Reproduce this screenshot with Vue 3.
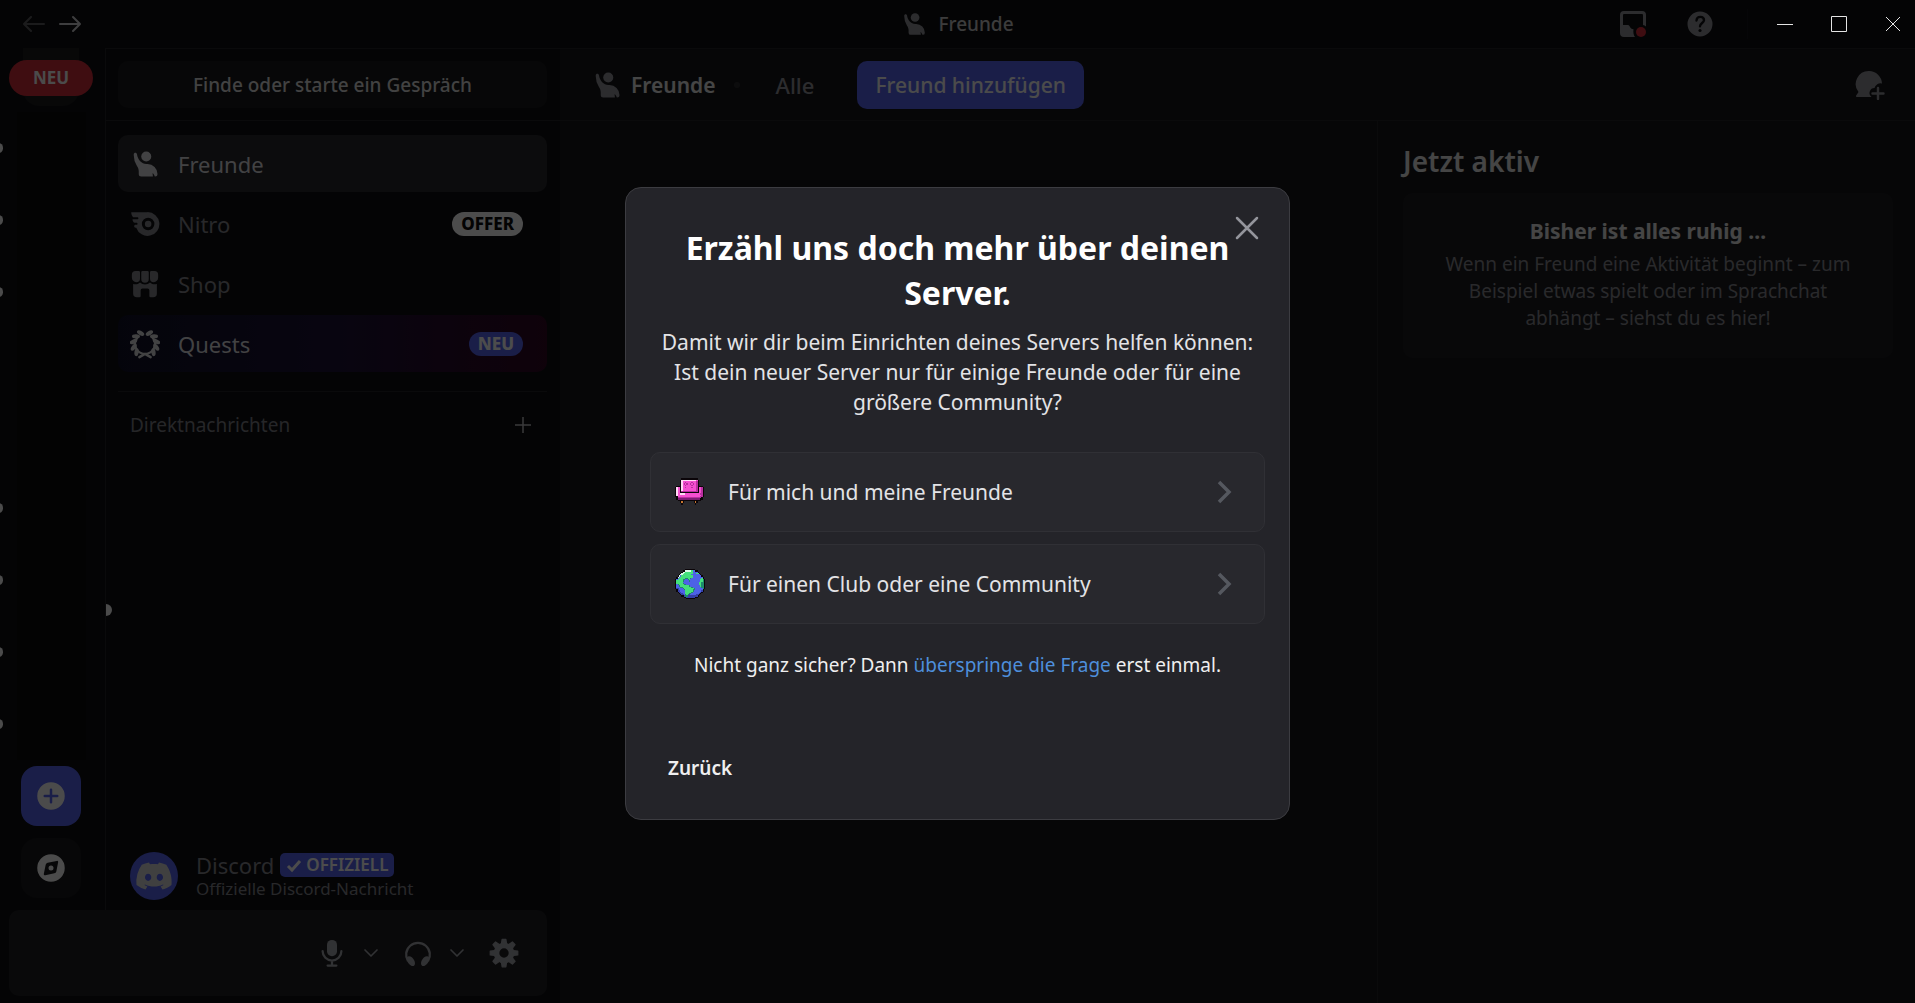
<script setup>
const navItems = [
  { label: 'Freunde', icon: 'friends', active: true },
  { label: 'Nitro', icon: 'nitro', badge: 'OFFER', badgeClass: 'badge-light' },
  { label: 'Shop', icon: 'shop' },
  { label: 'Quests', icon: 'quests', badge: 'NEU', badgeClass: 'badge-blurple', promo: true },
]

// true = server has unread messages
const servers = [true, true, true, false, false, true, true, true, true]

const options = [
  { label: 'Für mich und meine Freunde', icon: 'sofa' },
  { label: 'Für einen Club oder eine Community', icon: 'globe' },
]

// position of each wreath leaf, in degrees from the top
const leaves = [22, 50, 78, 106, 134]
const teeth = [0, 45, 90, 135, 180, 225, 270, 315]

const sofaArt = [
  '.....kkkkkkkkkkkkk......',
  '....kwwwwwwwwwwwwpk.....',
  '....kwpppppppppppmk.....',
  '....kwppmppppmpppmk.....',
  '....kwpmpmppmpmppmk.....',
  '....kwppmppppmpppmk.....',
  '.kkkkwpppppppppppmkkkk..',
  'kwppkwppmppppmpppmkppmk.',
  'kwppkwpppppppppppmkppmk.',
  'kwppkwpppppppppppmkppmk.',
  'kwppkmmmmmmmmmmmmmkppmk.',
  'kwppkkkkkkkkkkkkkkkppmk.',
  'kwppwwwwppppppppppppmmk.',
  'kwpppppppppppppppppppmk.',
  'kkppppppppppppppppppmmk.',
  '.kmmmmmmmmmmmmmmmmmmmk..',
  '.kddddddddddddddddddkk..',
  '..kkkkkkkkkkkkkkkkkkk...',
  '....kok........kok......',
  '....kok........kok......',
  '.....k..........k.......',
]
const globeArt = [
  '........kkkkkkkk........',
  '......kkwwwwwgbbkk......',
  '.....kwwggggggbbbbk.....',
  '....kwwgggggggbbbggk....',
  '...kwwgggggggbbbbbbbk...',
  '..kwbgggggggggbbbbbbbk..',
  '.kwbggggggggggbbbbbbbbk.',
  '.kbgggggttggtbbbbbbbbgk.',
  'kbggggttbbtgbbbbbbbbggtk',
  'kgggggtbbbbtbbbbbbbbggtk',
  'kgggggbbbbbbbbbbbbbggttk',
  'kgggggtbbbbbbbbbbbbggttk',
  'kbtggggttbbbbbbbbbbggttk',
  'kbbtgggggggtbbbbbbbbgttk',
  'kbbbttgggggggtbbbbbbbttk',
  'kddbbbtggggggggtbbbbbbtk',
  '.kdbbbbtggggggttbbbbbbk.',
  '.kddbbbbggggggtbbbbbbdk.',
  '..kddbbbgggggtbbbbbbdk..',
  '...kddbbgggttbbbbbbdk...',
  '....kddbtgtdbbbbbddk....',
  '.....kkdttddddddddk.....',
  '.......kkdddddddkk......',
  '.........kkkkkkk........',
]
const palette = {
  k: '#0b0509', w: '#ffd9f4', p: '#f44fd0', m: '#b92fa0', d: '#7d1c74', o: '#c9772f',
  g: '#43e07c', b: '#4d62e6', t: '#1d8a6c',
}
const globePalette = { ...palette, w: '#d9fbe6', d: '#3440a8' }

function pixels(rows, colors) {
  const out = []
  rows.forEach((row, y) => {
    let x = 0
    while (x < row.length) {
      let end = x + 1
      while (end < row.length && row[end] === row[x]) end++
      if (row[x] !== '.') out.push({ x, y, w: end - x, fill: colors[row[x]] })
      x = end
    }
  })
  return out
}
const art = {
  sofa: pixels(sofaArt, palette),
  globe: pixels(globeArt, globePalette),
}
</script>

<template>
  <div class="app">
    <svg class="defs" aria-hidden="true">
      <symbol id="i-friends" viewBox="0 0 24 24">
        <path d="M13 10a4 4 0 1 0 0-8 4 4 0 0 0 0 8Z" />
        <path d="M3 5v-.75C3 3.56 3.56 3 4.25 3s1.24.56 1.33 1.25C6.12 8.65 9.46 12 13 12h1a8 8 0 0 1 8 8 2 2 0 0 1-2 2 .21.21 0 0 1-.2-.15 7.65 7.65 0 0 0-1.32-2.3c-.15-.2-.42-.06-.39.17l.25 2c.02.15-.1.28-.25.28H9a2 2 0 0 1-2-2v-2.22c0-1.57-.67-3.05-1.53-4.37A15.85 15.85 0 0 1 3 5Z" />
      </symbol>
      <symbol id="i-nitro" viewBox="0 0 24 24">
        <path fill-rule="evenodd" d="M1 2.500h13a9.500 9.500 0 1 1-9 12.500h-.5a1.200 1.200 0 0 1-1.200-1.300c0-.7.5-1.200 1.200-1.200h.9c.5 0 .6-.4.6-.8 0-.5-.4-.7-.8-.7H4C2.600 11 2 9.500 2 8.200h3.800c.6 0 .9-.4.9-.9s-.3-.8-.9-.8H2.600C1.500 5.500 1 4.200 1 2.500Zm13.500 4.500a5 5 0 1 0 0 10 5 5 0 0 0 0-10Z" />
        <circle cx="14.500" cy="12" r="2.600" />
      </symbol>
      <symbol id="i-shop" viewBox="0 0 24 24">
        <path d="M4.500 1.500H7a1 1 0 0 1 1 1v5A3 3 0 0 1 5 10.500 3.500 3.500 0 0 1 1.500 7V4.500a3 3 0 0 1 3-3ZM10 1.500h4a1 1 0 0 1 1 1V8a3 3 0 1 1-6 0V2.500a1 1 0 0 1 1-1ZM17 1.500h2.500a3 3 0 0 1 3 3V7a3.500 3.500 0 0 1-3.500 3.500 3 3 0 0 1-3-3v-5a1 1 0 0 1 1-1Z" />
        <path d="M2.500 12c2 .6 4 .2 5.500-1.200 2 2 6 2 8 0 1.500 1.400 3.500 1.800 5.500 1.200v7.500a3 3 0 0 1-3 3h-2a1 1 0 0 1-1-1V17a1.500 1.500 0 0 0-1.500-1.500h-4A1.500 1.500 0 0 0 8.500 17v4.500a1 1 0 0 1-1 1h-2a3 3 0 0 1-3-3V12Z" />
      </symbol>
      <symbol id="i-quests" viewBox="0 0 24 24">
        <path d="M12 20a8 8 0 0 1-6-13.200M12 20a8 8 0 0 0 6-13.200" fill="none" stroke="currentColor" stroke-width="1.800" />
        <g v-for="a in leaves" :key="a">
          <ellipse cx="12" cy="2.600" rx="3.200" ry="1.700" :transform="`rotate(${a} 12 12) rotate(-52 12 2.600)`" />
          <ellipse cx="12" cy="2.600" rx="3.200" ry="1.700" :transform="`rotate(${-a} 12 12) rotate(52 12 2.600)`" />
        </g>
        <path d="m7.500 22.500 4.500-2.500 4.500 2.500" fill="none" stroke="currentColor" stroke-width="2" stroke-linecap="round" />
      </symbol>
      <symbol id="i-chevron" viewBox="0 0 24 24">
        <path d="m4 8 8 8 8-8" fill="none" stroke="currentColor" stroke-width="2.200" stroke-linecap="round" stroke-linejoin="round" />
      </symbol>
      <symbol id="i-close" viewBox="0 0 24 24">
        <path d="m4 4 16 16M20 4 4 20" fill="none" stroke="currentColor" stroke-width="2" stroke-linecap="round" />
      </symbol>
    </svg>

    <header class="titlebar">
      <div class="history">
        <button class="icon-btn faded" aria-label="Zurück navigieren">
          <svg width="24" height="24" viewBox="0 0 24 24"><path d="M22 12H2.500M9 5l-7 7 7 7" class="line" /></svg>
        </button>
        <button class="icon-btn" aria-label="Vorwärts navigieren">
          <svg width="24" height="24" viewBox="0 0 24 24"><path d="M2 12h19.500M15 5l7 7-7 7" class="line" /></svg>
        </button>
      </div>
      <div class="window-title">
        <svg width="26" height="26" class="muted"><use href="#i-friends" /></svg>
        <span>Freunde</span>
      </div>
      <div class="title-tools">
        <button class="icon-btn muted" aria-label="Posteingang">
          <svg width="28" height="28" viewBox="0 0 28 28">
            <path fill-rule="evenodd" d="M5 1h18a4 4 0 0 1 4 4v11.500a7 7 0 0 0-3-1.500V5a1 1 0 0 0-1-1H5a1 1 0 0 0-1 1v10h5c1.200 0 1.500 1 2 2s1.500 2 3.500 2.200c-.4 2.800 0 5.800 1.500 7.800H5a4 4 0 0 1-4-4V5a4 4 0 0 1 4-4Z" />
            <circle cx="22" cy="22" r="5" fill="#d22d39" />
          </svg>
        </button>
        <button class="icon-btn muted" aria-label="Hilfe">
          <svg width="26" height="26" viewBox="0 0 26 26">
            <path fill-rule="evenodd" d="M13 .5a12.500 12.500 0 1 1 0 25 12.500 12.500 0 0 1 0-25Z" />
            <path d="M9.500 9.500c.3-5 7.500-4.500 7.500-.3 0 2.600-4 3-4 6" fill="none" stroke="#0f0f13" stroke-width="2.400" stroke-linecap="round" />
            <circle cx="13" cy="19.500" r="1.600" fill="#0f0f13" />
          </svg>
        </button>
        <span class="divider"></span>
        <div class="window-controls">
          <button class="icon-btn" aria-label="Minimieren">
            <svg width="16" height="16" viewBox="0 0 16 16"><path d="M0 8.500h16" class="thin" /></svg>
          </button>
          <button class="icon-btn" aria-label="Maximieren">
            <svg width="16" height="16" viewBox="0 0 16 16"><path d="M.5.5h15v15H.5Z" class="thin" /></svg>
          </button>
          <button class="icon-btn" aria-label="Fenster schließen">
            <svg width="16" height="16" viewBox="0 0 16 16"><path d="m1 1 14 14M15 1 1 15" class="thin" /></svg>
          </button>
        </div>
      </div>
    </header>

    <div class="body">
      <div class="left">
        <div class="left-top">
          <nav class="rail" aria-label="Server">
            <div class="folder"></div>
            <div v-for="(unread, i) in servers" :key="i" class="server">
              <span v-if="unread" class="pip"></span>
            </div>
            <button class="rail-btn add" aria-label="Server hinzufügen">
              <svg width="30" height="30" viewBox="0 0 24 24"><path fill-rule="evenodd" d="M12 23a11 11 0 1 0 0-22 11 11 0 0 0 0 22Zm0-17a1 1 0 0 1 1 1v4h4a1 1 0 1 1 0 2h-4v4a1 1 0 1 1-2 0v-4H7a1 1 0 1 1 0-2h4V7a1 1 0 0 1 1-1Z" /></svg>
            </button>
            <button class="rail-btn discover" aria-label="Entdecken">
              <svg width="30" height="30" viewBox="0 0 24 24">
                <path fill-rule="evenodd" d="M23 12a11 11 0 1 1-22 0 11 11 0 0 1 22 0ZM7.740 9.300A2 2 0 0 1 9.300 7.750l7.220-1.450a1 1 0 0 1 1.180 1.180l-1.450 7.220a2 2 0 0 1-1.570 1.570l-7.220 1.450a1 1 0 0 1-1.180-1.180L7.740 9.300Z" />
                <circle cx="12" cy="12" r="2" />
              </svg>
            </button>
            <a href="#" class="new-pill">NEU</a>
          </nav>

          <aside class="sidebar">
            <div class="search-row">
              <button class="search">Finde oder starte ein Gespräch</button>
            </div>
            <nav class="nav">
              <a v-for="item in navItems" :key="item.label" href="#" class="nav-item"
                 :class="{ active: item.active, promo: item.promo }">
                <svg width="30" height="30"><use :href="`#i-${item.icon}`" /></svg>
                <span class="nav-label">{{ item.label }}</span>
                <span v-if="item.badge" class="badge" :class="item.badgeClass">{{ item.badge }}</span>
              </a>
            </nav>
            <div class="dm-head">
              <h2>Direktnachrichten</h2>
              <button class="icon-btn" aria-label="Direktnachricht erstellen">
                <svg width="16" height="16" viewBox="0 0 16 16"><path d="M8 0v16M0 8h16" fill="none" stroke="currentColor" stroke-width="1.500" /></svg>
              </button>
            </div>
            <div class="dm-list">
              <span class="dm-pip"></span>
              <a href="#" class="dm">
                <span class="avatar">
                  <svg width="38" height="38" viewBox="0 0 24 24"><path d="M19.730 4.870a18.200 18.200 0 0 0-4.600-1.440c-.21.4-.4.8-.58 1.210-1.690-.25-3.400-.25-5.100 0-.18-.41-.37-.82-.59-1.200-1.600.27-3.140.75-4.600 1.430A19.040 19.040 0 0 0 .96 17.700a18.430 18.430 0 0 0 5.630 2.870c.46-.62.86-1.280 1.200-1.980-.65-.25-1.290-.55-1.900-.92.17-.12.32-.24.47-.37 3.580 1.700 7.700 1.700 11.280 0l.46.37c-.6.36-1.250.67-1.900.92.35.7.75 1.350 1.200 1.980 2.030-.63 3.940-1.600 5.640-2.870.47-4.870-.78-9.090-3.300-12.830ZM8.300 15.120c-1.100 0-2-1.020-2-2.270 0-1.240.88-2.260 2-2.260s2.020 1.020 2 2.260c0 1.250-.89 2.270-2 2.270Zm7.400 0c-1.100 0-2-1.020-2-2.270 0-1.240.88-2.260 2-2.260s2.020 1.020 2 2.260c0 1.250-.88 2.270-2 2.270Z" /></svg>
                </span>
                <span class="dm-text">
                  <span class="dm-name">Discord
                    <span class="official">
                      <svg width="16" height="16" viewBox="0 0 16 16"><path d="m2 9 4 4 8-9" fill="none" stroke="currentColor" stroke-width="3" /></svg>OFFIZIELL</span>
                  </span>
                  <span class="dm-sub">Offizielle Discord-Nachricht</span>
                </span>
              </a>
            </div>
          </aside>
        </div>

        <section class="user-panel" aria-label="Benutzerbereich">
          <button class="icon-btn" aria-label="Stummschalten">
            <svg width="30" height="30" viewBox="0 0 24 24">
              <rect x="8" y="1.500" width="8" height="13" rx="4" />
              <path d="M4.500 10.500a7.500 7.500 0 0 0 15 0M12 18v4M8.500 22h7" fill="none" stroke="currentColor" stroke-width="1.800" stroke-linecap="round" />
            </svg>
          </button>
          <button class="icon-btn chev" aria-label="Eingabeoptionen">
            <svg width="18" height="18"><use href="#i-chevron" /></svg>
          </button>
          <button class="icon-btn" aria-label="Ein- und Ausgabe deaktivieren">
            <svg width="30" height="30" viewBox="0 0 24 24">
              <path d="M4 18.500A9.500 9.500 0 1 1 20 18.500" fill="none" stroke="currentColor" stroke-width="1.800" />
              <ellipse cx="6.300" cy="18.500" rx="2.600" ry="4.400" transform="rotate(-35 6.300 18.500)" />
              <ellipse cx="17.700" cy="18.500" rx="2.600" ry="4.400" transform="rotate(35 17.700 18.500)" />
            </svg>
          </button>
          <button class="icon-btn chev" aria-label="Ausgabeoptionen">
            <svg width="18" height="18"><use href="#i-chevron" /></svg>
          </button>
          <button class="icon-btn" aria-label="Einstellungen">
            <svg width="30" height="30" viewBox="0 0 24 24">
              <circle cx="12" cy="12" r="6" fill="none" stroke="currentColor" stroke-width="4.500" />
              <path v-for="t in teeth" :key="t" d="M10 4.500 10.500 1h3l.5 3.500Z" stroke="currentColor" stroke-linejoin="round" :transform="`rotate(${t} 12 12)`" />
            </svg>
          </button>
        </section>
      </div>

      <main class="main">
        <header class="main-head">
          <svg width="30" height="30" class="muted"><use href="#i-friends" /></svg>
          <h1>Freunde</h1>
          <span class="dot"></span>
          <button class="tab">Alle</button>
          <button class="add-friend">Freund hinzufügen</button>
          <button class="icon-btn muted new-dm" aria-label="Neue Gruppen-DM">
            <svg width="30" height="30" viewBox="0 0 30 30">
              <path d="M14 1a13 13 0 0 1 13 12.500 6 6 0 0 0-7.500 4.500 5 5 0 0 0-3 9H2a1 1 0 0 1-.8-1.600L3.500 22A13 13 0 0 1 14 1Z" />
              <path d="M23 18v11M17.500 23.500h11" fill="none" stroke="currentColor" stroke-width="2.400" stroke-linecap="round" />
            </svg>
          </button>
        </header>
        <div class="main-body">
          <div class="people"></div>
          <aside class="now">
            <h2>Jetzt aktiv</h2>
            <div class="quiet">
              <h3>Bisher ist alles ruhig …</h3>
              <p>Wenn ein Freund eine Aktivität beginnt – zum Beispiel etwas spielt oder im Sprachchat abhängt – siehst du es hier!</p>
            </div>
          </aside>
        </div>
      </main>
    </div>

    <div class="backdrop">
      <div class="modal" role="dialog" aria-modal="true" aria-labelledby="modal-title">
        <button class="icon-btn modal-close" aria-label="Schließen">
          <svg width="30" height="30"><use href="#i-close" /></svg>
        </button>
        <h2 id="modal-title">Erzähl uns doch mehr über deinen Server.</h2>
        <p class="lead">Damit wir dir beim Einrichten deines Servers helfen können: Ist dein neuer Server nur für einige Freunde oder für eine größere Community?</p>
        <div class="options">
          <button v-for="o in options" :key="o.label" class="option">
            <svg width="30" height="30" viewBox="0 0 24 24" shape-rendering="crispEdges">
              <g :transform="o.icon === 'sofa' ? 'translate(0 1)' : undefined">
                <rect v-for="(p, i) in art[o.icon]" :key="i" :x="p.x" :y="p.y" :width="p.w" height="1" :fill="p.fill" />
              </g>
            </svg>
            <span class="option-label">{{ o.label }}</span>
            <svg class="option-arrow" width="16" height="24" viewBox="0 0 16 24"><path d="m2 2 10 10L2 22" fill="none" stroke="currentColor" stroke-width="3.500" /></svg>
          </button>
        </div>
        <p class="skip">Nicht ganz sicher? Dann <a href="#">überspringe die Frage</a> erst einmal.</p>
        <footer>
          <button class="back">Zurück</button>
        </footer>
      </div>
    </div>
  </div>
</template>

<style>
body {
  margin: 0;
  background: #050506;
}
</style>

<style scoped>
.app {
  display: flex;
  flex-direction: column;
  height: 100vh;
  overflow: hidden;
  background: #0f0f13;
  color: #fbfbfb;
  font-family: "Noto Sans", "Open Sans", sans-serif;
  font-size: 21px;
}
.app * { box-sizing: border-box; }
.defs { position: absolute; width: 0; height: 0; }
h1, h2, h3, p { margin: 0; }
a { color: inherit; text-decoration: none; }
button {
  padding: 0;
  border: 0;
  background: none;
  color: inherit;
  font: inherit;
  cursor: pointer;
}
svg { display: block; flex: none; fill: currentColor; }
.icon-btn { display: flex; align-items: center; justify-content: center; }
.muted { color: #94959c; }
.line { fill: none; stroke: currentColor; stroke-width: 2; stroke-linecap: round; stroke-linejoin: round; }
.thin { fill: none; stroke: currentColor; stroke-width: 1; }

.titlebar {
  display: grid;
  grid-template-columns: 1fr auto 1fr;
  align-items: center;
  height: 48px;
  flex: none;
}
.history { display: flex; gap: 12px; padding-left: 22px; color: #d0d0d2; }
.faded { opacity: .4; }
.window-title { display: flex; align-items: center; gap: 11px; font-size: 19px; font-weight: 500; color: #c8c8c8; }
.title-tools { display: flex; align-items: center; justify-content: flex-end; gap: 40px; }
.divider { width: 1px; height: 30px; margin: 0 -11px 0 -6px; background: #17171b; }
.window-controls {
  position: relative;
  z-index: 3;
  display: flex;
  gap: 38px;
  padding-right: 14px;
  color: #e4e4e4;
}

.body { display: flex; flex: 1; min-height: 0; }
.left { display: flex; flex-direction: column; width: 560px; flex: none; }
.left-top { display: flex; flex: 1; min-height: 0; }
.rail {
  position: relative;
  display: flex;
  flex-direction: column;
  gap: 12px;
  width: 105px;
  flex: none;
  overflow: hidden;
}
.folder { width: 56px; height: 58px; flex: none; margin-left: 23px; border-radius: 0 0 16px 16px; background: #1b1b1d; }
.server { position: relative; height: 60px; flex: none; }
.server::before {
  content: "";
  position: absolute;
  inset: -6px 19px -6px 17px;
  background: #0a0a0b;
}
.pip { position: absolute; left: -6px; top: 25px; width: 9px; height: 10px; border-radius: 5px; background: #fbfbfb; }
.rail-btn {
  display: flex;
  align-items: center;
  justify-content: center;
  width: 60px;
  height: 60px;
  flex: none;
  margin-left: 21px;
  border-radius: 16px;
}
.add { background: #5865f2; }
.discover { background: #19191b; }
.new-pill {
  position: absolute;
  top: 12px;
  left: 9px;
  width: 84px;
  height: 36px;
  border-radius: 18px;
  background: #d22d39;
  font-size: 17px;
  font-weight: 700;
  line-height: 36px;
  text-align: center;
}

.sidebar {
  display: flex;
  flex-direction: column;
  flex: 1;
  min-width: 0;
  border-top: 1px solid #232327;
  border-left: 1px solid #232327;
}
.search-row { padding: 12px 13px 12px 12px; border-bottom: 1px solid #232327; }
.search {
  width: 100%;
  height: 47px;
  border-radius: 10px;
  background: #1a1a1b;
  color: #dcdcdd;
  font-size: 19px;
  font-weight: 500;
}
.nav {
  display: flex;
  flex-direction: column;
  gap: 3px;
  margin: 0 13px 0 12px;
  padding: 14px 0 19px;
  border-bottom: 1px solid #232327;
}
.nav-item {
  display: flex;
  align-items: center;
  gap: 18px;
  height: 57px;
  padding: 0 24px 0 12px;
  border-radius: 10px;
  color: #85868d;
  font-size: 22px;
}
.nav-label { flex: 1; }
.active { background: #29292d; color: #dedee0; }
.promo { background: linear-gradient(90deg, #101027, #1c1338 50%, #2b0a2b 80%, #320824); color: #dedee0; }
.badge {
  height: 24px;
  padding: 0 9px;
  border-radius: 12px;
  font-size: 17px;
  font-weight: 800;
  line-height: 24px;
}
.badge-light { background: #fff; color: #0a0a0a; }
.badge-blurple { background: #5865f2; color: #fff; }
.dm-head {
  display: flex;
  align-items: center;
  justify-content: space-between;
  padding: 19px 29px 0 24px;
  color: #7f8087;
}
.dm-head h2 { font-size: 19px; font-weight: 400; line-height: 28px; }
.dm-head .icon-btn { color: #c0c0c4; }
.dm-list {
  position: relative;
  display: flex;
  flex: 1;
  flex-direction: column;
  justify-content: flex-end;
  padding: 0 13px 6px 12px;
}
.dm-pip {
  position: absolute;
  left: 0;
  top: 35%;
  width: 6px;
  height: 12px;
  border-radius: 0 6px 6px 0;
  background: #fbfbfb;
}
.dm { display: flex; align-items: center; gap: 18px; height: 57px; padding-left: 12px; color: #85868d; font-size: 22px; }
.avatar {
  display: flex;
  align-items: center;
  justify-content: center;
  width: 48px;
  height: 48px;
  border-radius: 50%;
  background: #5865f2;
  color: #d8d8d8;
}
.dm-text { display: flex; flex-direction: column; }
.dm-name { display: flex; align-items: center; gap: 6px; line-height: 26px; }
.official {
  display: flex;
  align-items: center;
  gap: 4px;
  height: 24px;
  padding: 0 6px;
  border-radius: 5px;
  background: #5865f2;
  color: #fff;
  font-size: 17px;
  font-weight: 600;
}
.dm-sub { font-size: 17px; line-height: 22px; }
.user-panel {
  display: flex;
  align-items: center;
  justify-content: flex-end;
  height: 86px;
  margin: 0 13px 7px 9px;
  padding-right: 28px;
  border-radius: 10px;
  background: #202024;
  color: #a6a7ad;
}
.user-panel .chev { width: 56px; padding-right: 8px; }

.main {
  display: flex;
  flex: 1;
  flex-direction: column;
  min-width: 0;
  border-top: 1px solid #232327;
  background: #16161a;
}
.main-head {
  display: flex;
  align-items: center;
  height: 72px;
  flex: none;
  padding: 0 30px 0 32px;
  border-bottom: 1px solid #232327;
}
.main-head h1 { margin-left: 9px; font-size: 21px; font-weight: 600; color: #e6e6e7; }
.dot { width: 6px; height: 6px; margin: 0 36px 0 18px; border-radius: 50%; background: #2a2a2e; }
.tab { color: #94959c; font-size: 22px; font-weight: 500; }
.add-friend {
  height: 48px;
  margin-left: 43px;
  padding: 0 18px;
  border-radius: 10px;
  background: #5865f2;
  font-weight: 500;
}
.new-dm { margin-left: auto; }
.main-body { display: flex; flex: 1; min-height: 0; }
.people { flex: 1; }
.now { width: 538px; padding: 20px 22px 0 25px; border-left: 1px solid #232327; }
.now h2 { font-size: 28px; font-weight: 600; line-height: 40px; color: #e6e6e7; }
.quiet { margin-top: 12px; padding: 22px 40px 26px; border-radius: 10px; background: #1d1d21; text-align: center; }
.quiet h3 { font-size: 21px; font-weight: 700; line-height: 32px; color: #e6e6e7; }
.quiet p { margin-top: 4px; font-size: 19px; line-height: 27px; color: #8a8b92; }

.backdrop {
  position: fixed;
  inset: 0;
  z-index: 2;
  display: flex;
  align-items: center;
  justify-content: center;
  padding-top: 4px;
  background: rgba(0, 0, 0, .7);
}
.modal {
  position: relative;
  width: 665px;
  max-width: 100%;
  padding: 37px 24px 27px;
  border: 1px solid #3c3c41;
  border-radius: 16px;
  background: #242429;
  text-align: center;
}
.modal-close { position: absolute; top: 25px; right: 27px; color: #94959c; }
.modal h2 { font-size: 32px; font-weight: 700; line-height: 45px; color: #fff; }
.lead { margin-top: 12px; line-height: 30px; color: #e3e3e6; }
.options { display: flex; flex-direction: column; gap: 12px; margin-top: 35px; }
.option {
  display: flex;
  align-items: center;
  gap: 23px;
  height: 80px;
  padding: 0 31px 0 24px;
  border: 1px solid #303035;
  border-radius: 10px;
  background: #28282d;
  color: #e3e3e6;
}
.option-label { flex: 1; text-align: left; }
.option-arrow { color: #55585f; }
.skip { margin-top: 26px; font-size: 19px; line-height: 30px; color: #efeff0; }
.skip a { color: #4e8fdc; }
footer { display: flex; margin-top: 64px; }
.back { height: 48px; padding: 0 18px; color: #efeff0; font-size: 19px; font-weight: 600; }
</style>
